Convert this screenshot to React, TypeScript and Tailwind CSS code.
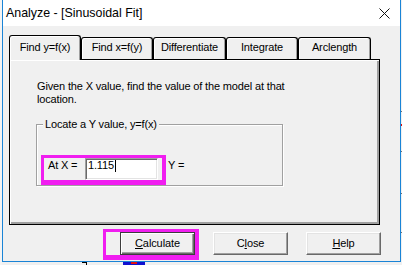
import React from "react";

const tabs = [
  { label: "Find y=f(x)", w: "w-[72px]", sel: true },
  { label: "Find x=f(y)", w: "w-[72px]", sel: false },
  { label: "Differentiate", w: "w-[73px]", sel: false },
  { label: "Integrate", w: "w-[72px]", sel: false },
  { label: "Arclength", w: "w-[73px]", sel: false },
];

function Btn({ children, def }: { children: React.ReactNode; def?: boolean }) {
  return (
    <div
      className={
        def
          ? "w-[75px] h-[23px] flex items-center justify-center bg-[#f0f0f0] border border-[#3c3c3c] shadow-[inset_1px_1px_0_#fff,inset_-1px_-1px_0_#696969,inset_-2px_-2px_0_#a0a0a0] text-[11px] leading-[13px] tracking-[-0.1px] text-black"
          : "w-[75px] h-[23px] flex items-center justify-center bg-[#f0f0f0] border border-t-white border-l-white border-r-[#696969] border-b-[#696969] shadow-[inset_-1px_-1px_0_#a0a0a0,inset_1px_1px_0_#e3e3e3] text-[11px] leading-[13px] tracking-[-0.1px] text-black"
      }
    >
      {children}
    </div>
  );
}

export default function App() {
  return (
    <div className="w-[402px] h-[265px] bg-[#f0f0f0] flex overflow-hidden font-['Liberation_Sans',Arial,sans-serif] text-black">
      <div className="w-[2px] bg-[#f4f4f4]" />
      <div className="w-[399px] flex flex-col">
        <div className="h-[262px] border-x border-b border-[#1a84d6] flex flex-col bg-[#f0f0f0]">
          {/* title bar */}
          <div className="h-[26px] bg-white flex items-center justify-between pl-[3px] pr-[10px]">
            <span className="text-[12.4px] leading-[16px] text-black">Analyze - [Sinusoidal Fit]</span>
            <svg width="11" height="11" viewBox="0 0 11 11" className="block">
              <path d="M0.5 0.5 L10.5 10.5 M10.5 0.5 L0.5 10.5" stroke="#111" strokeWidth="1" fill="none" />
            </svg>
          </div>
          {/* body */}
          <div className="flex-1 flex flex-col pl-[6px] pt-[9px]">
            <div className="flex items-end h-[24px]">
              {tabs.map((t) =>
                t.sel ? (
                  <div
                    key={t.label}
                    className={`${t.w} h-[25px] -mb-px relative z-10 bg-[#f0f0f0] border-l border-t border-r border-black rounded-t-[3px] shadow-[inset_-1px_0_0_#a0a0a0,inset_1px_1px_0_#fff] text-center pt-[4px] text-[11px] leading-[14px] tracking-[-0.15px]`}
                  >
                    {t.label}
                  </div>
                ) : (
                  <div
                    key={t.label}
                    className={`${t.w} h-[22px] bg-[#f0f0f0] border-l border-t border-r border-black rounded-t-[3px] shadow-[inset_-1px_0_0_#a0a0a0,inset_1px_1px_0_#fff] text-center pt-[2px] text-[11px] leading-[14px] tracking-[-0.15px]`}
                  >
                    {t.label}
                  </div>
                )
              )}
            </div>
            {/* panel */}
            <div className="w-[371px] h-[166px] border border-black shadow-[inset_1px_1px_0_#fff,inset_-2px_-2px_0_#a0a0a0] pl-[26px] pt-[20px] flex flex-col">
              <div className="pl-[1px] text-[11px] leading-[13px] tracking-[-0.15px]">
                Given the X value, find the value of the model at that
                <br />
                location.
              </div>
              <div className="mt-[18px] w-[247px] h-[62px] relative border border-[#a0a0a0] shadow-[inset_1px_1px_0_#fff,1px_1px_0_#fff] pl-[4px] pt-[30px] flex items-start">
                <span className="absolute left-[6px] top-[-7px] px-[2px] bg-[#f0f0f0] text-[11px] leading-[13px] tracking-[-0.15px]">
                  Locate a Y value, y=f(x)
                </span>
                <div className="w-[125px] h-[30px] border-[#f01ef0] border-l-[3px] border-t-[3px] border-r-[4px] border-b-[5px] flex items-start">
                  <span className="w-[41px] pl-[4px] mt-[1px] text-[11px] leading-[13px] tracking-[-0.15px]">At X =</span>
                  <div className="w-[73px] h-[22px] bg-white border border-t-[#a0a0a0] border-l-[#a0a0a0] border-r-white border-b-white shadow-[inset_1px_1px_0_#696969,inset_-1px_-1px_0_#e3e3e3] pl-[2px] flex items-start">
                    <span className="text-[11px] leading-[13px] tracking-[-0.15px]">1.115</span>
                    <span className="w-px h-[12px] bg-black mt-[1px] ml-[1px]" />
                  </div>
                </div>
                <span className="ml-[2px] mt-[4px] text-[11px] leading-[13px] tracking-[-0.15px]">Y =</span>
              </div>
            </div>
            {/* buttons */}
            <div className="mt-[4px] h-[31px] flex items-start">
              <div className="ml-[94px] w-[96px] h-[31px] border-[#f01ef0] border-l-[3px] border-t-[3px] border-r-[4px] border-b-[5px] pl-[14px]">
                <Btn def>
                  <span>
                    <span className="underline underline-offset-[1px]">C</span>alculate
                  </span>
                </Btn>
              </div>
              <div className="ml-[14px] mt-[3px]">
                <Btn>
                  <span>
                    C<span className="underline underline-offset-[1px]">l</span>ose
                  </span>
                </Btn>
              </div>
              <div className="ml-[18px] mt-[3px]">
                <Btn>
                  <span>
                    <span className="underline underline-offset-[1px]">H</span>elp
                  </span>
                </Btn>
              </div>
            </div>
          </div>
        </div>
        {/* desktop chart strip below window */}
        <div className="h-[3px] relative bg-[#f0f0f0]">
          <div className="absolute left-[80px] top-0 w-[5px] h-px bg-black" />
          <div className="absolute left-[84px] top-0 w-px h-[3px] bg-black" />
          <div className="absolute left-[121px] top-0 w-[22px] h-[3px] bg-[#1010d0]" />
          <div className="absolute left-[129px] top-0 w-[6px] h-[2px] bg-[#e01010]" />
        </div>
      </div>
      <div className="w-px relative bg-[#f0f0f0]">
        <div className="absolute top-[111px] left-0 w-px h-px bg-[#707070]" />
        <div className="absolute top-[124px] left-0 w-px h-[2px] bg-[#e01010]" />
        <div className="absolute top-[151px] left-0 w-px h-px bg-[#707070]" />
        <div className="absolute top-[193px] left-0 w-px h-px bg-[#707070]" />
        <div className="absolute top-[232px] left-0 w-px h-px bg-[#707070]" />
      </div>
    </div>
  );
}
